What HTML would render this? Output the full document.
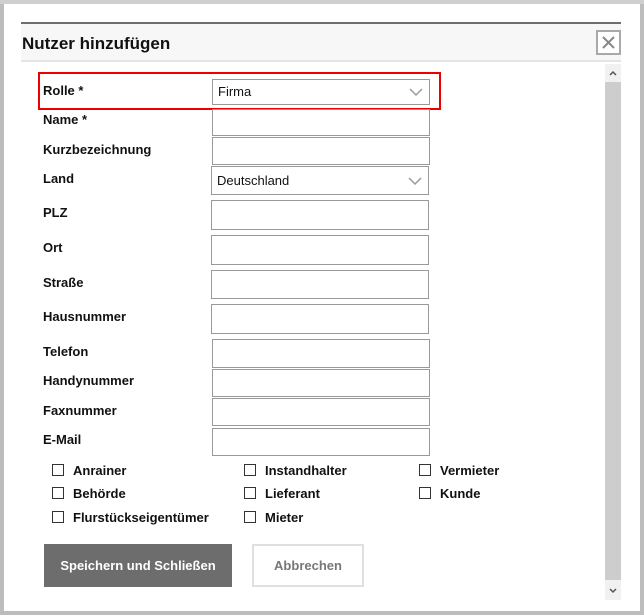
<!DOCTYPE html><html><head><style>
*{margin:0;padding:0;box-sizing:border-box}
body{width:644px;height:615px;background:#bdbdbd;position:relative;overflow:hidden;font-family:"Liberation Sans",Arial,sans-serif}
.a{position:absolute}
.m{left:4px;top:4px;width:636px;height:607px;background:#fff}
.lb{position:absolute;left:43px;font-size:13px;font-weight:bold;color:#111}
.in{position:absolute;left:212px;width:218px;border:1px solid #999;background:#fff;font-size:13px;color:#111;padding-left:5px;line-height:24px}
.in svg{position:absolute;right:6px;top:8px}
.cb{position:absolute;width:12px;height:12px;border:1px solid #333;background:#fff}
.cl{position:absolute;font-size:13px;font-weight:bold;color:#111}
</style></head><body>
<div class="a" style="left:0;top:0;width:644px;height:4px;background:#cfcfcf"></div>
<div class="a m"></div>
<div class="a" style="left:21px;top:22px;width:600px;height:2px;background:#6e6e6e"></div>
<div class="a" style="left:21px;top:24px;width:600px;height:38px;background:#f7f7f7;border-bottom:2px solid #e4e4e4"></div>
<div class="a" style="left:22px;top:34px;font-size:17px;font-weight:bold;color:#111">Nutzer hinzufügen</div>
<div class="a" style="left:596px;top:30px;width:25px;height:25px;border:2px solid #a9a9a9;background:#fff"><svg width="21" height="21" style="position:absolute;left:0;top:0"><path d="M5 5L16 16M16 5L5 16" stroke="#888" stroke-width="2"/></svg></div>
<div class="a" style="left:605px;top:64px;width:16px;height:536px;background:#f1f1f1"></div>
<div class="a" style="left:605px;top:82px;width:16px;height:498px;background:#cdcdcd"></div>
<svg class="a" style="left:605px;top:66px" width="16" height="14"><path d="M5 9L8 6L11 9" stroke="#555" stroke-width="1.5" fill="none"/></svg>
<svg class="a" style="left:605px;top:584px" width="16" height="14"><path d="M5 5L8 8L11 5" stroke="#555" stroke-width="1.5" fill="none"/></svg>
<div class="a" style="left:38px;top:72px;width:403px;height:38px;border:2px solid #e00"></div>
<div class="lb" style="top:83px">Rolle *</div>
<div class="in" style="top:79px;height:26px">Firma<svg width="14" height="9"><path d="M1 1L7 7L13 1" stroke="#999" stroke-width="1.5" fill="none"/></svg></div>
<div class="lb" style="top:112px">Name *</div><div class="in" style="top:109px;height:27px"></div>
<div class="lb" style="top:142px">Kurzbezeichnung</div><div class="in" style="top:137px;height:28px"></div>
<div class="lb" style="top:171px">Land</div>
<div class="in" style="top:166px;left:211px;height:29px;line-height:27px">Deutschland<svg width="14" height="9" style="top:10px"><path d="M1 1L7 7L13 1" stroke="#999" stroke-width="1.5" fill="none"/></svg></div>
<div class="lb" style="top:205px">PLZ</div><div class="in" style="left:211px;top:200px;height:30px"></div>
<div class="lb" style="top:240px">Ort</div><div class="in" style="left:211px;top:235px;height:30px"></div>
<div class="lb" style="top:275px">Straße</div><div class="in" style="left:211px;top:270px;height:29px"></div>
<div class="lb" style="top:309px">Hausnummer</div><div class="in" style="left:211px;top:304px;height:30px"></div>
<div class="lb" style="top:344px">Telefon</div><div class="in" style="top:339px;height:29px"></div>
<div class="lb" style="top:373px">Handynummer</div><div class="in" style="top:369px;height:28px"></div>
<div class="lb" style="top:403px">Faxnummer</div><div class="in" style="top:398px;height:28px"></div>
<div class="lb" style="top:432px">E-Mail</div><div class="in" style="top:428px;height:28px"></div>
<div class="cb" style="left:52px;top:464px"></div><div class="cl" style="left:73px;top:463px">Anrainer</div>
<div class="cb" style="left:244px;top:464px"></div><div class="cl" style="left:265px;top:463px">Instandhalter</div>
<div class="cb" style="left:419px;top:464px"></div><div class="cl" style="left:440px;top:463px">Vermieter</div>
<div class="cb" style="left:52px;top:487px"></div><div class="cl" style="left:73px;top:486px">Behörde</div>
<div class="cb" style="left:244px;top:487px"></div><div class="cl" style="left:265px;top:486px">Lieferant</div>
<div class="cb" style="left:419px;top:487px"></div><div class="cl" style="left:440px;top:486px">Kunde</div>
<div class="cb" style="left:52px;top:511px"></div><div class="cl" style="left:73px;top:510px">Flurstückseigentümer</div>
<div class="cb" style="left:244px;top:511px"></div><div class="cl" style="left:265px;top:510px">Mieter</div>
<div class="a" style="left:44px;top:544px;width:188px;height:43px;background:#6d6d6d;color:#fff;font-size:13px;font-weight:bold;text-align:center;line-height:43px">Speichern und Schließen</div>
<div class="a" style="left:252px;top:544px;width:112px;height:43px;border:2px solid #e0e0e0;background:#fff;color:#777;font-size:13px;font-weight:bold;text-align:center;line-height:39px">Abbrechen</div>
</body></html>
